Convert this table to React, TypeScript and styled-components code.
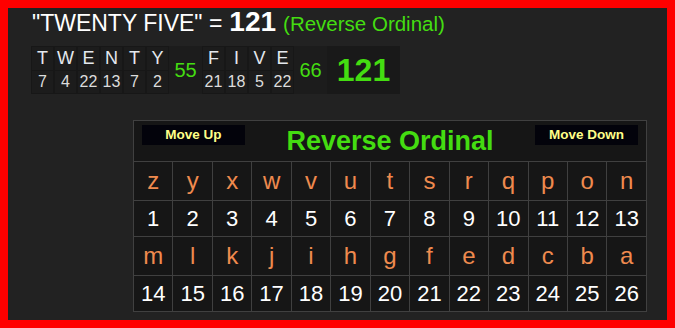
import React from 'react'
import styled, { createGlobalStyle } from 'styled-components'

const GlobalStyle = createGlobalStyle`
  body {
    margin: 0;
    background: #222222;
    font-family: 'Liberation Sans', Arial, sans-serif;
  }
`

const Frame = styled.div`
  box-sizing: border-box;
  width: 675px;
  height: 328px;
  border: 8px solid #ff0000;
  background: #222222;
  padding: 0 0 0 23px;
  display: flex;
  flex-direction: column;
  align-items: flex-start;
`

const Heading = styled.div`
  display: flex;
  align-items: baseline;
  gap: 7px;
  margin-left: 1px;
  line-height: 1;
`

const Phrase = styled.span`
  color: #ffffff;
  font-size: 23px;
`

const Total = styled.span`
  color: #ffffff;
  font-size: 28px;
  font-weight: bold;
`

const CipherName = styled.span`
  color: #44dd11;
  font-size: 20.5px;
`

const Breakdown = styled.div`
  display: flex;
  margin-top: 10px;
  background: #1c1c1c;
`

const LetterCell = styled.div`
  display: flex;
  flex-direction: column;
  min-width: 23px;
  box-sizing: border-box;
  border: 1px solid #171717;
  text-align: center;
`

const Letter = styled.div`
  height: 23px;
  line-height: 23px;
  font-size: 18px;
  color: #e4e8ee;
  border-bottom: 1px solid #171717;
`

const LetterValue = styled.div`
  height: 22px;
  line-height: 22px;
  font-size: 16px;
  color: #dcdcdc;
`

const WordSum = styled.div`
  display: flex;
  align-items: center;
  justify-content: center;
  width: 33px;
  font-size: 20px;
  color: #44dd11;
`

const GrandTotal = styled.div`
  display: flex;
  align-items: center;
  justify-content: center;
  width: 73px;
  background: #191919;
  font-size: 32px;
  font-weight: bold;
  color: #44dd11;
`

const Chart = styled.table`
  margin: 26px 0 0 102px;
  width: 514px;
  border-collapse: collapse;
  background: #161616;
  table-layout: fixed;
`

const HeaderCell = styled.td`
  height: 40px;
  border: 1px solid #404040;
  padding: 0 8px;
`

const HeaderBar = styled.div`
  display: flex;
  align-items: center;
  justify-content: space-between;
`

const MoveButton = styled.button`
  width: 103px;
  height: 20px;
  margin-top: -13px;
  padding: 0;
  border: none;
  background: #03030b;
  color: #ffff88;
  font-family: 'Liberation Sans', Arial, sans-serif;
  font-size: 13.5px;
  font-weight: bold;
`

const ChartTitle = styled.span`
  color: #44dd11;
  font-size: 27px;
  font-weight: bold;
`

const Cell = styled.td<{ $kind: 'letter' | 'number' }>`
  height: ${(p) => (p.$kind === 'letter' ? '38px' : '35px')};
  padding: 0;
  border: 1px solid #404040;
  text-align: center;
  font-size: ${(p) => (p.$kind === 'letter' ? '24px' : '22px')};
  color: ${(p) => (p.$kind === 'letter' ? '#ef8a4e' : '#ffffff')};
`

const words = [
  { letters: 'TWENTY', sum: 55 },
  { letters: 'FIVE', sum: 66 },
]

const reverse = (c: string) => 26 - (c.toLowerCase().charCodeAt(0) - 97)

const alphabet = 'zyxwvutsrqponmlkjihgfedcba'.split('')
const rows = [alphabet.slice(0, 13), alphabet.slice(13)]

export default function App() {
  return (
    <>
      <GlobalStyle />
      <Frame>
        <Heading>
          <Phrase>"TWENTY FIVE" =</Phrase>
          <Total>121</Total>
          <CipherName>(Reverse Ordinal)</CipherName>
        </Heading>

        <Breakdown>
          {words.map((w) => (
            <React.Fragment key={w.letters}>
              {w.letters.split('').map((c, i) => (
                <LetterCell key={i}>
                  <Letter>{c}</Letter>
                  <LetterValue>{reverse(c)}</LetterValue>
                </LetterCell>
              ))}
              <WordSum>{w.sum}</WordSum>
            </React.Fragment>
          ))}
          <GrandTotal>121</GrandTotal>
        </Breakdown>

        <Chart>
          <tbody>
            <tr>
              <HeaderCell colSpan={13}>
                <HeaderBar>
                  <MoveButton>Move Up</MoveButton>
                  <ChartTitle>Reverse Ordinal</ChartTitle>
                  <MoveButton>Move Down</MoveButton>
                </HeaderBar>
              </HeaderCell>
            </tr>
            {rows.map((row, r) => (
              <React.Fragment key={r}>
                <tr>
                  {row.map((c) => (
                    <Cell $kind="letter" key={c}>
                      {c}
                    </Cell>
                  ))}
                </tr>
                <tr>
                  {row.map((c) => (
                    <Cell $kind="number" key={c}>
                      {reverse(c)}
                    </Cell>
                  ))}
                </tr>
              </React.Fragment>
            ))}
          </tbody>
        </Chart>
      </Frame>
    </>
  )
}
